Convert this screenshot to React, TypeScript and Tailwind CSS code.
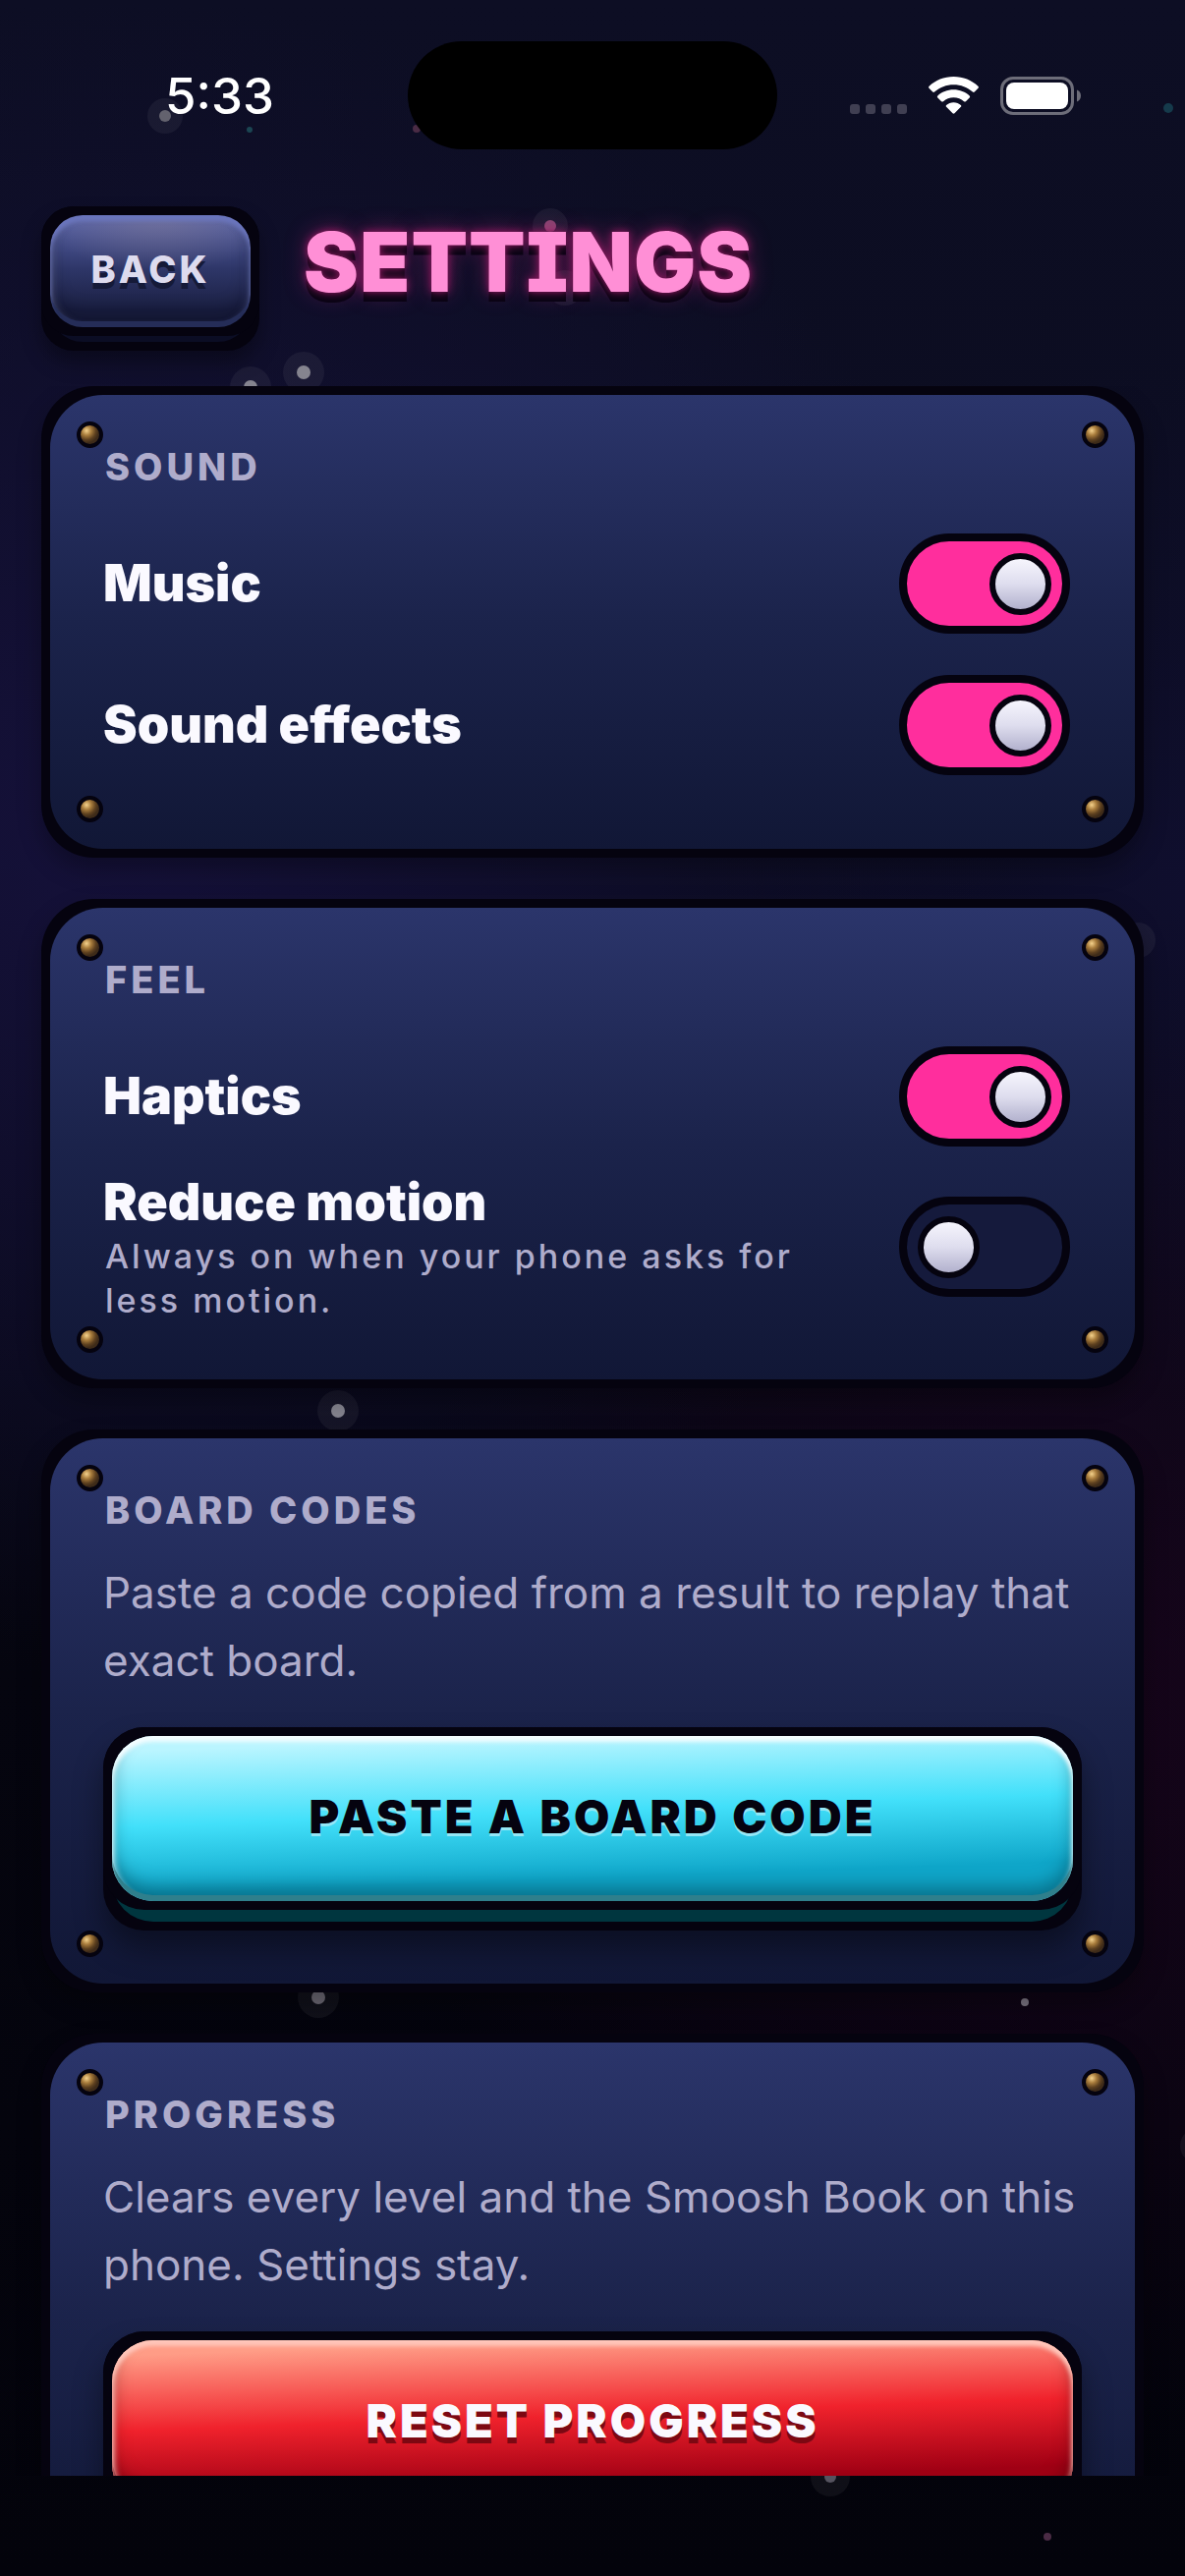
import { useState } from 'react';
import type { ReactNode } from 'react';

const stars = [
    { x: 168, y: 118, r: 6, halo: 18, color: '#63626e' },
    { x: 254, y: 132, r: 3, halo: 0, color: '#1b4552' },
    { x: 424, y: 131, r: 4, halo: 0, color: '#4a2b45' },
    { x: 560, y: 230, r: 6, halo: 18, color: '#84446e' },
    { x: 575, y: 293, r: 0, halo: 18, color: '#84446e' },
    { x: 1189, y: 110, r: 5, halo: 0, color: '#153a4b' },
    { x: 309, y: 379, r: 7, halo: 21, color: '#85848f' },
    { x: 255, y: 394, r: 7, halo: 21, color: '#85848f' },
    { x: 1158, y: 957, r: 0, halo: 18, color: '#85848f' },
    { x: 344, y: 1436, r: 7, halo: 21, color: '#85848f' },
    { x: 324, y: 2033, r: 7, halo: 21, color: '#6b6873' },
    { x: 1043, y: 2038, r: 4, halo: 0, color: '#7a7480' },
    { x: 1219, y: 2184, r: 0, halo: 18, color: '#7a7480' },
    { x: 845, y: 2521, r: 6, halo: 20, color: '#55535f' },
    { x: 1066, y: 2582, r: 4, halo: 0, color: '#4a2b45' },
];

function StarField() {
    return (
        <svg
            className="absolute inset-0 h-full w-full"
            viewBox="0 0 1206 2622"
            preserveAspectRatio="xMidYMin slice"
            aria-hidden="true"
        >
            {stars.map((star) => (
                <g key={`${star.x}-${star.y}`}>
                    <circle cx={star.x} cy={star.y} r={star.halo} fill="#ffffff" fillOpacity="0.05" />
                    <circle cx={star.x} cy={star.y} r={star.r} fill={star.color} />
                </g>
            ))}
        </svg>
    );
}

function StatusBar() {
    return (
        <div className="flex items-center pt-[42px]">
            <div className="flex flex-1 justify-center pl-8 text-[51px] leading-none font-medium text-white">
                5:33
            </div>
            <div className="h-[110px] w-[376px] rounded-full bg-black" />
            <div className="flex flex-1 items-center justify-center gap-[22px] pr-8">
                <div className="flex gap-[6px] self-end pb-px">
                    <span className="size-[10px] rounded-[3px] bg-[#403f52]" />
                    <span className="size-[10px] rounded-[3px] bg-[#403f52]" />
                    <span className="size-[10px] rounded-[3px] bg-[#403f52]" />
                    <span className="size-[10px] rounded-[3px] bg-[#403f52]" />
                </div>
                <svg width="51" height="38" viewBox="0 0 51 38" fill="#ffffff" aria-label="Wi-Fi">
                    <path d="M25.500 0C35.300 0 44 3.600 50.400 9.800Q51.400 10.800 50.500 11.800L46.800 15.600Q45.900 16.500 44.900 15.600C39.700 10.800 32.900 8.200 25.500 8.200S11.300 10.800 6.100 15.600Q5.100 16.500 4.200 15.600L.5 11.800Q-.4 10.800.6 9.800C7 3.600 15.700 0 25.500 0Z" />
                    <path d="M25.500 13.200C31.800 13.200 37.500 15.500 41.700 19.400Q42.700 20.400 41.700 21.400L37.900 25.200Q37 26 36 25.200C33.200 22.700 29.500 21.200 25.500 21.200S17.800 22.700 15 25.200Q14 26 13.100 25.200L9.300 21.400Q8.300 20.400 9.300 19.400C13.500 15.500 19.200 13.200 25.500 13.200Z" />
                    <path d="M25.500 26.200C28.400 26.200 31 27.300 32.900 29Q33.700 29.900 32.900 30.700L26.500 37.200Q25.500 38.100 24.500 37.200L18.100 30.700Q17.300 29.900 18.100 29C20 27.300 22.600 26.200 25.500 26.200Z" />
                </svg>
                <svg width="82" height="39" viewBox="0 0 82 39" aria-label="Battery full">
                    <rect x="1.500" y="1.500" width="72" height="36" rx="11.500" fill="none" stroke="#6d6d79" strokeWidth="3" />
                    <rect x="6" y="6" width="63" height="27" rx="8" fill="#ffffff" />
                    <path d="M78 13.500C80.600 14.500 82 16.800 82 19.500S80.600 24.500 78 25.500Z" fill="#6d6d79" />
                </svg>
            </div>
        </div>
    );
}

function Rivet({ className }: { className: string }) {
    return (
        <span
            className={`absolute size-[27px] rounded-full border-4 border-[#05030f] bg-[radial-gradient(circle_at_32%_28%,#f5d28c_0%,#a87c3c_26%,#5d401f_50%,#3e2b19_66%)] ${className}`}
        />
    );
}

function Card({ title, children }: { title: string; children: ReactNode }) {
    return (
        <section className="rounded-[54px] bg-[#05030f] p-[9px] shadow-[0_12px_24px_rgba(0,0,0,0.3)]">
            <div className="relative flex flex-col gap-[27px] rounded-[54px] bg-linear-to-b from-[#2b356b] via-[#1b234b] to-[#111736] p-[54px]">
                <Rivet className="top-[27px] left-[27px]" />
                <Rivet className="top-[27px] right-[27px]" />
                <Rivet className="bottom-[27px] left-[27px]" />
                <Rivet className="right-[27px] bottom-[27px]" />
                <h2 className="pl-[2px] text-[38px] leading-[39px] font-extrabold tracking-[4px] text-[#afaccb] uppercase">
                    {title}
                </h2>
                {children}
            </div>
        </section>
    );
}

type ToggleRowProps = {
    id: string;
    label: string;
    hint?: string;
    initial: boolean;
};

function ToggleRow({ id, label, hint, initial }: ToggleRowProps) {
    const [on, setOn] = useState(initial);

    return (
        <div className="flex min-h-36 items-center justify-between gap-16 py-1 pr-[12px]">
            <div>
                <label htmlFor={id} className="block text-[52px] leading-16 font-black text-[#faf9ff]">
                    {label}
                </label>
                {hint && (
                    <p id={`${id}-hint`} className="pl-[2px] text-[34px] leading-[45px] font-medium tracking-[3px] text-[#afaccb]">
                        {hint}
                    </p>
                )}
            </div>
            <input
                id={id}
                type="checkbox"
                role="switch"
                aria-describedby={hint ? `${id}-hint` : undefined}
                checked={on}
                onChange={() => setOn(!on)}
                className="flex h-[102px] w-[174px] shrink-0 cursor-pointer appearance-none items-center rounded-full border-8 border-[#05030f] bg-[#151a3c] px-[11px] before:size-[63px] before:rounded-full before:border-6 before:border-[#05030f] before:bg-linear-to-b before:from-[#f6f5fd] before:via-[#deddee] before:to-[#b2b1cd] checked:justify-end checked:bg-[#ff2e9d]"
            />
        </div>
    );
}

export default function App() {
    return (
        <main className="relative flex h-screen w-full flex-col overflow-hidden bg-[radial-gradient(ellipse_75%_32%_at_10%_32%,#15113a_0%,transparent_100%),radial-gradient(ellipse_60%_28%_at_92%_66%,rgba(48,4,44,0.4)_0%,transparent_100%),radial-gradient(ellipse_40%_20%_at_100%_34%,rgba(18,16,56,0.6)_0%,transparent_100%),linear-gradient(to_bottom,#0d0e24_0%,#0b0c1e_35%,#05050f_65%,#03030b_100%)] pb-[102px] font-['Inter','Liberation_Sans',sans-serif]">
            <StarField />
            <div className="relative flex min-h-0 flex-1 flex-col">
                <StatusBar />
                <header className="flex items-start gap-[45px] px-[42px] pt-[58px] pb-9">
                    <button
                        type="button"
                        className="rounded-[33px] bg-[#05030f] p-[9px] shadow-[0_12px_20px_rgba(0,0,0,0.35)]"
                    >
                        <span className="block rounded-[33px] bg-[#0b0d24] pb-[6px]">
                            <span className="-mx-[9px] -mt-[9px] block rounded-[33px] bg-[#05030f] p-[9px]">
                                <span className="flex h-[114px] w-[204px] items-center justify-center rounded-[33px] bg-[radial-gradient(ellipse_60%_50%_at_55%_0%,rgba(140,130,150,0.5)_0%,transparent_100%),linear-gradient(to_bottom,#5b66ac_0%,#2e3668_48%,#1a1f42_85%)] pb-1 text-[38px] font-extrabold tracking-[3px] text-[#dddbee] shadow-[inset_0_6px_4px_#6a75bd,inset_0_-6px_0_#252d58,inset_3px_0_8px_rgba(160,165,210,0.35),inset_-3px_0_8px_rgba(120,130,200,0.25),inset_0_-14px_18px_rgba(5,5,20,0.4)] [text-shadow:0_6px_0_#151a38]">
                                    BACK
                                </span>
                            </span>
                        </span>
                    </button>
                    <h1 className="text-[84px] leading-[114px] font-black tracking-[1px] text-[#ff8fd6] [font-feature-settings:'cv08'] [text-shadow:0_0_3px_#5a1244,0_0_8px_#a01c6a,0_10px_0_#0a0414,0_0_24px_rgba(255,46,157,0.35)]">
                        SETTINGS
                    </h1>
                </header>

                <div className="flex min-h-0 flex-1 flex-col gap-[42px] overflow-y-auto px-[42px] [scrollbar-width:none] *:shrink-0">
                    <Card title="Sound">
                        <div>
                            <ToggleRow id="music" label="Music" initial={true} />
                            <ToggleRow id="sound-effects" label="Sound effects" initial={true} />
                        </div>
                    </Card>

                    <Card title="Feel">
                        <div>
                            <ToggleRow id="haptics" label="Haptics" initial={true} />
                            <ToggleRow
                                id="reduce-motion"
                                label="Reduce motion"
                                hint="Always on when your phone asks for less motion."
                                initial={false}
                            />
                        </div>
                    </Card>

                    <Card title="Board codes">
                        <p className="pt-[3px] pb-[6px] text-[44px] leading-[69px] text-[#afaccb]">
                            Paste a code copied from a result to replay that exact board.
                        </p>
                        <button
                            type="button"
                            className="rounded-[42px] bg-[#05030f] p-[9px] shadow-[0_18px_30px_rgba(0,0,0,0.4)]"
                        >
                            <span className="block rounded-[42px] bg-[#00363f] pb-3">
                                <span className="-mx-[9px] -mt-[9px] block rounded-[42px] bg-[#05030f] p-[9px]">
                                    <span className="flex h-[168px] items-center justify-center rounded-[42px] bg-[linear-gradient(178deg,#baf5ff_8%,#42e0fa_46%,#0fa6c9_80%)] pb-1 text-[47px] font-black tracking-[3px] text-[#05030f] shadow-[inset_0_6px_4px_#f4fdff,inset_0_-6px_0_#2f7f8c,inset_4px_0_5px_rgba(215,250,255,0.5),inset_-3px_0_4px_rgba(215,250,255,0.4),inset_0_-14px_18px_rgba(0,60,75,0.5)] [text-shadow:0_3px_0_#94e7f6]">
                                        PASTE A BOARD CODE
                                    </span>
                                </span>
                            </span>
                        </button>
                    </Card>

                    <Card title="Progress">
                        <p className="pt-[3px] pb-[6px] text-[44px] leading-[69px] text-[#afaccb]">
                            Clears every level and the Smoosh Book on this phone. Settings stay.
                        </p>
                        <button
                            type="button"
                            className="rounded-[42px] bg-[#05030f] p-[9px] shadow-[0_18px_30px_rgba(0,0,0,0.4)]"
                        >
                            <span className="block rounded-[42px] bg-[#3f0008] pb-3">
                                <span className="-mx-[9px] -mt-[9px] block rounded-[42px] bg-[#05030f] p-[9px]">
                                    <span className="flex h-[168px] items-center justify-center rounded-[42px] bg-[linear-gradient(178deg,#ff9c86_8%,#f0222c_46%,#a00014_80%)] pb-1 text-[47px] font-black tracking-[3px] text-[#faf9ff] shadow-[inset_0_6px_4px_#ffc6ba,inset_0_-6px_0_#8a3038,inset_4px_0_5px_rgba(255,205,195,0.5),inset_-3px_0_4px_rgba(255,205,195,0.4),inset_0_-14px_18px_rgba(70,0,8,0.5)] [text-shadow:0_6px_0_#7c0812]">
                                        RESET PROGRESS
                                    </span>
                                </span>
                            </span>
                        </button>
                    </Card>
                </div>
            </div>
        </main>
    );
}
